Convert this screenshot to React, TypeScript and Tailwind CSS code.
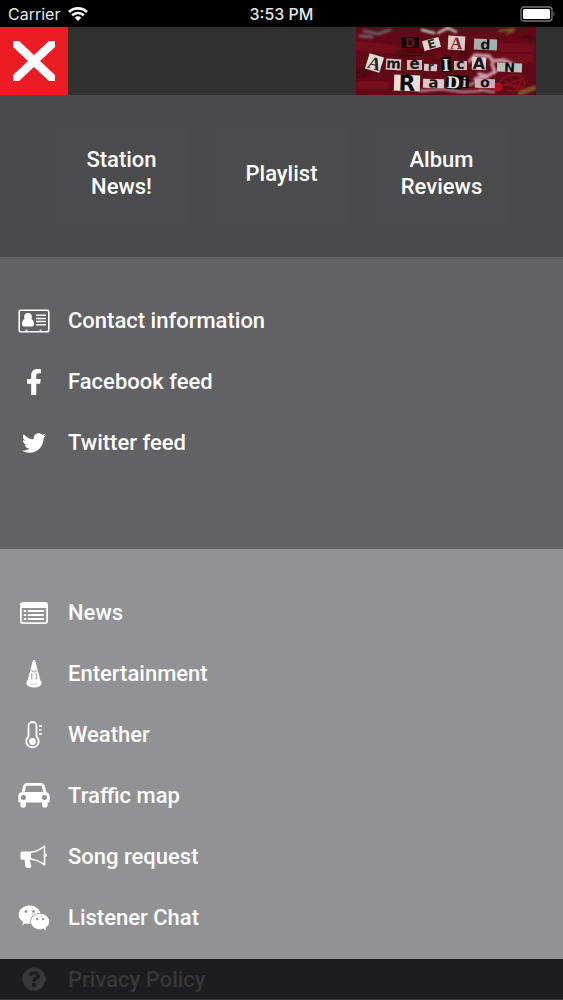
import React from 'react';
import { FaFacebookF, FaTwitter, FaWeixin, FaQuestionCircle } from 'react-icons/fa';

function ContactIcon() {
  return (
    <svg viewBox="0 0 32 24" className="h-6 w-8" fill="none">
      <rect x="1.200" y="1.200" width="29.600" height="21.600" rx="1.800" stroke="white" strokeWidth="1.600" />
      <circle cx="10" cy="7.800" r="3.900" fill="white" />
      <path d="M4 15.500c0-3.600 1.200-5.500 3.500-5.500 1.600 1.400 3.500 1.400 5 0 2.200 0 3.500 1.900 3.500 5.500 0 1.200-.8 2-1.900 2H5.900c-1.100 0-1.900-.8-1.900-2z" fill="white" />
      <path d="M18 6.200h10M18 9.400h10M18 12.600h10M18 15.800h10" stroke="white" strokeWidth="1.500" />
      <path d="M8.500 20.500v2M22.500 20.500v2" stroke="white" strokeWidth="1.800" />
    </svg>
  );
}

function NewsIcon() {
  return (
    <svg viewBox="0 0 28 22" className="h-[22px] w-7" fill="none">
      <rect x=".9" y=".9" width="26.200" height="20.200" rx="2" stroke="white" strokeWidth="1.800" />
      <path d="M1 2.500Q1 .8 3 .8h22q2 0 2 1.700v3.500H1z" fill="white" />
      <path d="M7.800 8.900H24M7.800 13H24M7.800 17.100H24" stroke="white" strokeWidth="2" />
      <path d="M3.800 8.900h2.400M3.800 13h2.400M3.800 17.100h2.400" stroke="white" strokeWidth="2" />
    </svg>
  );
}

function SpotlightIcon() {
  return (
    <svg viewBox="0 0 16 29" className="h-[29px] w-4">
      <path d="M7 1h2l5.800 22H1.200z" fill="white" />
      <ellipse cx="8" cy="24" rx="7.700" ry="4.500" fill="white" />
      <path d="M5.300 10.800l2 2.200h1.400l2-2.200M5.800 14.500v6M10.200 14.500v6" stroke="#929194" strokeWidth="1" fill="none" />
      <path d="M4 24.500c2 1 5 1 7 0" stroke="#c4c3c5" strokeWidth=".8" fill="none" />
    </svg>
  );
}

function ThermometerIcon() {
  return (
    <svg viewBox="0 0 18 28" className="h-7 w-[18px]" fill="none" stroke="white">
      <path d="M3.500 15.500V5a4 4 0 0 1 8 0v10.500a6.200 6.200 0 1 1-8 0z" strokeWidth="1.800" />
      <circle cx="7.500" cy="20.500" r="3.400" fill="white" stroke="none" />
      <path d="M14 5h3M14 9h2.500M14 13h3" strokeWidth="1.700" />
    </svg>
  );
}

function CarIcon() {
  return (
    <svg viewBox="0 0 32 25" className="h-[25px] w-8">
      <path
        fillRule="evenodd"
        fill="white"
        d="M9 0h14c2 0 3.300 1.200 3.800 3l1.700 6.200c2 .3 3.200 1.700 3.200 3.700v5.500c0 .7-.4 1.100-1 1.100h-1v2.300a2.900 2.900 0 0 1-5.800 0v-2.300H8.100v2.300a2.900 2.900 0 0 1-5.800 0v-2.300h-1c-.6 0-1-.4-1-1.100v-5.500c0-2 1.200-3.400 3.200-3.700L5.200 3C5.700 1.200 7 0 9 0zm.5 2.700c-.8 0-1.200.3-1.400 1L6.700 9.100h18.600l-1.400-5.400c-.2-.7-.6-1-1.400-1zM5.500 12a2.500 2.500 0 1 0 0 5 2.500 2.500 0 0 0 0-5zm21 0a2.500 2.500 0 1 0 0 5 2.500 2.500 0 0 0 0-5z"
      />
    </svg>
  );
}

function MegaphoneIcon() {
  return (
    <svg viewBox="0 0 28 24" className="h-6 w-7">
      <path d="M2 6.500h9v8.300h-1.200l.8 3.500c-.5 1 1.100 2.200.7 3.400-.7 1.600-4.400 1.700-5.600.3-.8-2-.9-5-1-7.200H2A1.600 1.600 0 0 1 .5 13V8A1.500 1.500 0 0 1 2 6.500z" fill="white" />
      <path d="M10.500 7.300c5-.5 9.600-2.700 14-6.200v18.800c-4.400-3.500-9-5.400-14-5.900" fill="none" stroke="white" strokeWidth="1.600" strokeLinejoin="round" />
      <path d="M25 7.800a2.600 2.600 0 0 1 0 5z" fill="white" />
    </svg>
  );
}

type Row = { label: string; icon: React.ReactNode };

const feeds: Row[] = [
  { label: 'Contact information', icon: <ContactIcon /> },
  { label: 'Facebook feed', icon: <FaFacebookF className="h-[26px] w-[26px]" /> },
  { label: 'Twitter feed', icon: <FaTwitter className="h-6 w-6" /> },
];

const services: Row[] = [
  { label: 'News', icon: <NewsIcon /> },
  { label: 'Entertainment', icon: <SpotlightIcon /> },
  { label: 'Weather', icon: <ThermometerIcon /> },
  { label: 'Traffic map', icon: <CarIcon /> },
  { label: 'Song request', icon: <MegaphoneIcon /> },
  { label: 'Listener Chat', icon: <FaWeixin className="h-8 w-8" /> },
];

function MenuList({ rows }: { rows: Row[] }) {
  return (
    <ul>
      {rows.map((row) => (
        <li key={row.label}>
          <a href="#" className="flex h-[61px] items-center text-[22px] font-medium">
            <span className="flex w-[68px] shrink-0 justify-center" aria-hidden="true">{row.icon}</span>
            {row.label}
          </a>
        </li>
      ))}
    </ul>
  );
}

const SERIF = "font-['Liberation_Serif'] font-bold";
const SANS = "font-['DejaVu_Sans'] font-bold";

type Tile = { t: string; x: number; y: number; w: number; h: number; r: number; bg: string; fg: string; s: number; font: string };

const tiles: Tile[] = [
  { t: 'D', x: 45, y: 10, w: 18, h: 11, r: 0, bg: '#160509', fg: '#69101c', s: 12, font: SANS },
  { t: 'E', x: 67, y: 12, w: 17, h: 10, r: -15, bg: '#dfd6cf', fg: '#292421', s: 12, font: SANS },
  { t: 'A', x: 92, y: 9, w: 17, h: 14, r: 3, bg: '#dfc9c5', fg: '#87232e', s: 17, font: SERIF },
  { t: 'd', x: 118, y: 12, w: 23, h: 11, r: 2, bg: '#a5b0ae', fg: '#111111', s: 14, font: SANS },
  { t: 'A', x: 11, y: 28, w: 15, h: 16, r: 17, bg: '#e7e0d4', fg: '#242424', s: 18, font: SERIF },
  { t: 'm', x: 30, y: 32, w: 15, h: 11, r: 3, bg: '#d9c6c6', fg: '#18090b', s: 14, font: SANS },
  { t: 'e', x: 51, y: 33, w: 15, h: 10, r: 0, bg: '#ceb9b6', fg: '#241114', s: 15, font: SANS },
  { t: 'r', x: 68, y: 37, w: 13, h: 7, r: 3, bg: '#d8c7c6', fg: '#282020', s: 12, font: SANS },
  { t: 'I', x: 85, y: 30, w: 10, h: 15, r: -3, bg: '#080607', fg: '#e6ddca', s: 18, font: SERIF },
  { t: 'c', x: 98, y: 34, w: 13, h: 9, r: 0, bg: '#ceb7b8', fg: '#160c0e', s: 14, font: SANS },
  { t: 'A', x: 116, y: 30, w: 14, h: 13, r: 3, bg: '#e0d0d0', fg: '#181113', s: 16, font: SANS },
  { t: 'N', x: 141, y: 36, w: 25, h: 9, r: 2, bg: '#b9c0bb', fg: '#090909', s: 13, font: SANS },
  { t: 'R', x: 38, y: 48, w: 26, h: 16, r: 2, bg: '#ebe0d9', fg: '#080708', s: 22, font: SANS },
  { t: 'a', x: 67, y: 52, w: 21, h: 9, r: 2, bg: '#dccbca', fg: '#171012', s: 15, font: SANS },
  { t: 'D', x: 90, y: 48, w: 15, h: 14, r: 2, bg: '#070707', fg: '#efe5dc', s: 18, font: SERIF },
  { t: 'i', x: 104, y: 49, w: 9, h: 12, r: 3, bg: '#090709', fg: '#e3c9c9', s: 14, font: SERIF },
  { t: 'o', x: 119, y: 52, w: 20, h: 9, r: 2, bg: '#c9afb4', fg: '#1d0a0e', s: 14, font: SANS },
];

function StationLogo() {
  return (
    <svg viewBox="0 0 180 68" className="h-[68px] w-[180px] shrink-0" role="img" aria-label="Dead American Radio">
      <defs>
        <filter id="smear" x="-10%" y="-20%" width="120%" height="140%">
          <feGaussianBlur stdDeviation="2.500" />
        </filter>
        <filter id="splash" x="-10%" y="-20%" width="120%" height="140%">
          <feGaussianBlur stdDeviation="1" />
        </filter>
      </defs>
      <rect width="180" height="68" fill="#620917" />
      <g filter="url(#smear)" fill="none" strokeLinecap="round">
        <path d="M0 18c20 4 34 2 42 6M4 58h26M145 20h30M70 28h12M150 32h24" stroke="#780c1b" strokeWidth="9" />
        <path d="M0 48l10-3M40 26l40 2M106 20l3 8M170 12l8 3M86 2h-20" stroke="#3c0710" strokeWidth="5" />
      </g>
      <g filter="url(#splash)" fill="none" strokeLinecap="round">
        <path d="M8 4l14 3 12-4M4 9l12 1" stroke="#6d5c65" strokeWidth="3" />
        <path d="M82 6l10-5 8 4M66 3l12 3" stroke="#d5c5c4" strokeWidth="2.500" />
        <path d="M114 34l5-6 14 1 4 5 10-1 10 4M136 37l3 8-8 4-8-2M131 50l-12 2" stroke="#d09daa" strokeWidth="3.500" />
        <path d="M64 64l22-2 20 3 18-1M110 59l12-4M124 63l14 2" stroke="#b3808c" strokeWidth="2.500" />
        <path d="M143 4l16-2-8 5" stroke="#896026" strokeWidth="2" />
        <path d="M164 66l14-5" stroke="#7b5225" strokeWidth="5" />
      </g>
      <path d="M143 56c4-9 20-11 25-3 4 7-7 13-17 10M149 54l12 8 5-10-18 6 18 1" stroke="#8a101b" fill="none" strokeWidth="1.500" />
      <circle cx="142" cy="60" r="4.500" fill="#b00d1a" />
      {tiles.map((l, i) => (
        <g key={i} transform={`translate(${l.x + l.w / 2} ${l.y + l.h / 2}) rotate(${l.r})`}>
          <rect x={-l.w / 2} y={-l.h / 2} width={l.w} height={l.h} fill={l.bg} />
          <text y={/[mercao]/.test(l.t) ? l.s * 0.27 : l.s * 0.35} textAnchor="middle" fontSize={l.s} fill={l.fg} className={l.font}>{l.t}</text>
        </g>
      ))}
    </svg>
  );
}

export default function App() {
  return (
    <div className="min-h-screen bg-[#201f21] font-['Roboto',sans-serif] text-white">
      <div className="grid h-[27px] grid-cols-3 items-center bg-black px-2 font-['Inter',sans-serif] text-[16px] text-[#e8e8e8]">
        <div className="flex items-center gap-2">
          <span>Carrier</span>
          <svg viewBox="0 0 20 14" className="h-[14px] w-5" fill="none" stroke="white" strokeWidth="2.600" role="img" aria-label="Wi-Fi">
            <path d="M1 5a13 13 0 0 1 18 0M4.200 8.300a8.300 8.300 0 0 1 11.600 0" />
            <path d="M6.800 10.700a4.700 4.700 0 0 1 6.400 0L10 14z" fill="white" stroke="none" />
          </svg>
        </div>
        <time className="text-center font-medium">3:53 PM</time>
        <svg viewBox="0 0 36 16" className="h-4 w-9 justify-self-end" role="img" aria-label="Battery full">
          <rect x="2" y="1" width="31" height="14" rx="3" fill="none" stroke="#77777a" strokeWidth="1.300" />
          <rect x="4" y="3" width="27" height="10" rx="1.500" fill="white" />
          <path d="M34.500 5.500q2 2.500 0 5z" fill="#77777a" />
        </svg>
      </div>

      <header className="flex h-[68px] justify-between bg-[#323132] pr-[27px]">
        <button type="button" aria-label="Close menu" className="flex w-[68px] items-center justify-center bg-[#ed1c24]">
          <svg viewBox="0 0 42 42" className="h-[42px] w-[42px]" fill="white">
            <path d="M0 1h6l15 14L36 1h6v6L27 21l15 14v6h-6L21 27 6 41H0v-6l15-14L0 7z" />
          </svg>
        </button>
        <StationLogo />
      </header>

      <main>
        <nav aria-label="Featured" className="flex h-[162px] items-center justify-center gap-7 bg-[#4a494b]">
          {['Station News!', 'Playlist', 'Album Reviews'].map((label) => (
            <button key={label} type="button" className="h-[98px] w-[132px] bg-[#4c4b4d] px-4 pb-[6px] text-[22px] leading-[27px] font-medium">
              {label}
            </button>
          ))}
        </nav>
        <nav aria-label="Station" className="bg-[#626164] pt-[33px] pb-[76px]">
          <MenuList rows={feeds} />
        </nav>
        <nav aria-label="Services" className="bg-[#929194] pt-[33px] pb-[11px]">
          <MenuList rows={services} />
        </nav>
      </main>

      <footer className="border-b border-[#39373a] bg-[#1d1c1f] text-[#38373a]">
        <a href="#" className="flex h-10 items-center text-[22px] font-medium">
          <span className="flex w-[68px] shrink-0 justify-center" aria-hidden="true">
            <FaQuestionCircle className="h-6 w-6" />
          </span>
          Privacy Policy
        </a>
      </footer>
    </div>
  );
}
